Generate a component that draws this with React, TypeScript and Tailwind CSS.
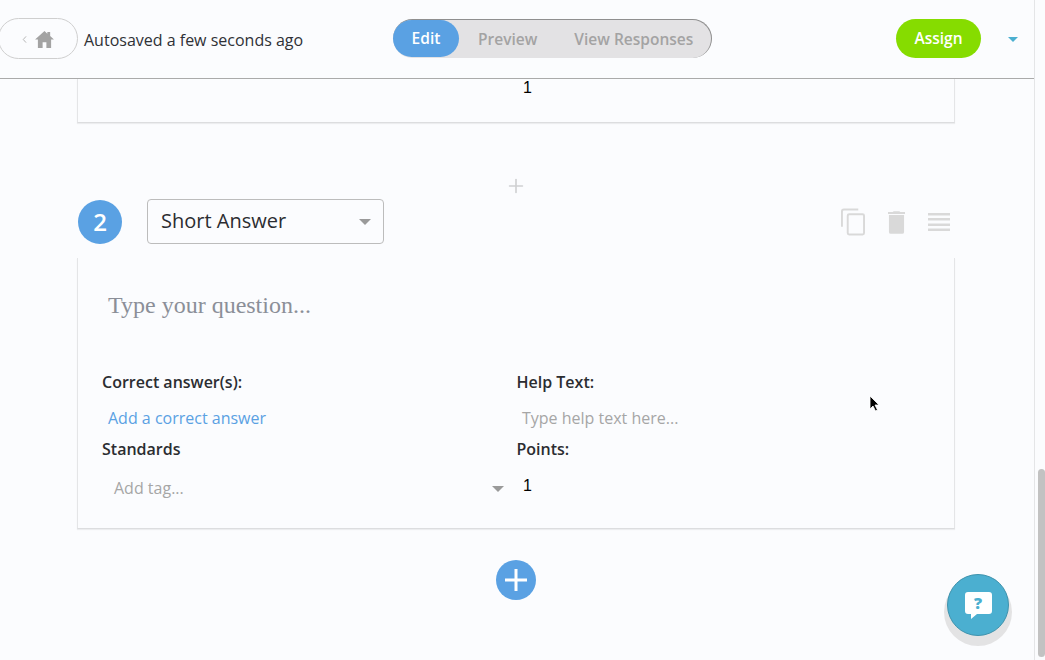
import { Plus } from "lucide-react";

const font = { fontFamily: '"Open Sans", sans-serif' };

function Caret({ className }: { className: string }) {
  return (
    <svg viewBox="0 0 12 6" className={className} fill="currentColor">
      <path d="M0 0h12L6 6z" />
    </svg>
  );
}

function Header() {
  return (
    <div className="relative flex h-[79px] shrink-0 items-center border-b border-[#aaaaaa] pb-[1px]">
      <div className="ml-[-2px] flex h-[41px] w-[80px] items-center justify-center gap-[8px] rounded-full border border-[#cfcfcf] pr-[1px] pt-[1px]">
        <svg viewBox="0 0 8 12" className="h-[9px] w-[5px]" fill="none" stroke="#a8a8a8" strokeWidth="1.300">
          <path d="M6.500 1 2 6l4.500 5" />
        </svg>
        <svg viewBox="0 0 20 18" className="h-[17px] w-[19px]" fill="#a3a3a3">
          <path d="M10 0 0 9h3v9h5v-6h4v6h5V9h3l-4-3.600V1h-3v2z" />
        </svg>
      </div>
      <span className="ml-[6px] pt-[3px] text-[16px] text-[#2f3136]">Autosaved a few seconds ago</span>
      <div className="absolute left-[393px] top-[19px] flex h-[39px] w-[319px] rounded-full border-t border-r border-[#8f8f8f] bg-[#e3e2e4] text-[15.500px] font-semibold text-[#a3a3a3]">
        <div className="flex h-[37px] w-[66px] items-center justify-center rounded-full bg-[#5aa1e3] pt-[1px] text-white">Edit</div>
        <span className="ml-[19px] mt-[8px]">Preview</span>
        <span className="ml-[37px] mt-[8px]">View Responses</span>
      </div>
      <div className="absolute left-[896px] top-[19px] flex h-[39px] w-[85px] items-center justify-center rounded-full bg-[#86dc00] pt-[1px] text-[15.500px] font-semibold text-white">
        Assign
      </div>
      <Caret className="absolute left-[1008px] top-[37px] h-[5px] w-[10px] text-[#4bafd0]" />
    </div>
  );
}

function Field({ label, children }: { label: string; children: React.ReactNode }) {
  return (
    <div>
      <div className="text-[16px] font-semibold leading-[20px] text-[#2b2d31]">{label}</div>
      {children}
    </div>
  );
}

export default function App() {
  return (
    <div className="relative flex h-[660px] w-[1045px] overflow-hidden bg-[#fbfcfe]" style={font}>
      <div className="flex w-[1034px] flex-col">
        <Header />

        <div className="ml-[77px] h-[44px] w-[878px] border-x border-b border-x-[#e4e5e7] border-b-[#dcdddf] pl-[445px] shadow-[0_1px_1px_rgba(0,0,0,0.06)]">
          <div className="text-[16px] leading-[17px] text-black" style={{ fontFamily: '"Liberation Sans", sans-serif' }}>
            1
          </div>
        </div>

        <div className="mt-[52px] flex justify-center">
          <Plus className="ml-[-3px] h-[22px] w-[22px] text-[#cfd0d2]" strokeWidth={1.8} />
        </div>

        <div className="ml-[78px] mt-[2px] flex h-[45px] w-[877px] items-center">
          <div className="mt-[1px] flex h-[44px] w-[44px] items-center justify-center rounded-full bg-[#5aa1e3] text-[24px] font-semibold text-white">
            2
          </div>
          <div className="ml-[25px] flex h-[45px] w-[237px] items-center justify-between rounded-[4px] border border-[#bcbcbc] pb-[2px] pl-[13px] pr-[12px] text-[20px] text-[#2b2d31]">
            Short Answer
            <Caret className="mt-[2px] h-[6px] w-[12px] text-[#9a9a9a]" />
          </div>
          <div className="ml-auto mr-[5px] flex items-center pt-[1px] text-[#d9d9d9]">
            <svg viewBox="0 0 25 28" className="h-[28px] w-[24px]" fill="none" stroke="currentColor" strokeWidth="2">
              <path d="M18 1H3a2 2 0 0 0-2 2v16" />
              <rect x="7" y="6" width="17" height="21" rx="1.500" />
            </svg>
            <svg viewBox="0 0 18 24" className="ml-[23px] h-[23px] w-[17px]" fill="currentColor">
              <path d="M6 0h6l1 1h5v2H0V1h5zM1 4h16v18a2 2 0 0 1-2 2H3a2 2 0 0 1-2-2z" />
            </svg>
            <svg viewBox="0 0 22 18" className="ml-[23px] h-[18px] w-[22px]" fill="currentColor">
              <path d="M0 0h22v2.500H0zM0 5h22v2.500H0zM0 10.500h22v2.500H0zM0 15.500h22v2.500H0z" />
            </svg>
          </div>
        </div>

        <div className="ml-[77px] mt-[14px] h-[271px] w-[878px] border-x border-b border-x-[#e4e5e7] border-b-[#dcdddf] pl-[24px] shadow-[0_1px_1px_rgba(0,0,0,0.06)]">
          <div className="pl-[6px] pt-[30px] text-[24px] leading-[34px] text-[#8b8f98]" style={{ fontFamily: '"Liberation Serif", serif' }}>
            Type your question...
          </div>
          <div className="mt-[50px] grid grid-cols-[414.500px_1fr]">
            <Field label="Correct answer(s):">
              <div className="mb-[11px] ml-[6px] mt-[16px] text-[16px] leading-[20px] text-[#5aa1e3]">Add a correct answer</div>
            </Field>
            <Field label="Help Text:">
              <div className="mb-[11px] ml-[5.500px] mt-[16px] text-[16px] leading-[20px] text-[#a6a6a6]">Type help text here...</div>
            </Field>
            <Field label="Standards">
              <div className="relative ml-[12px] mt-[19px] text-[16px] leading-[20px] text-[#a6a6a6]">
                Add tag...
                <Caret className="absolute left-[378px] top-[8px] h-[6px] w-[12px] text-[#9a9a9a]" />
              </div>
            </Field>
            <Field label="Points:">
              <div className="ml-[6.500px] mt-[17px] text-[16px] leading-[20px] text-black" style={{ fontFamily: '"Liberation Sans", sans-serif' }}>
                1
              </div>
            </Field>
          </div>
        </div>

        <div className="mt-[31px] flex justify-center">
          <div className="ml-[-2px] flex h-[40px] w-[40px] items-center justify-center rounded-full bg-[#5aa1e3]">
            <svg viewBox="0 0 22 22" className="h-[22px] w-[22px]" fill="#fff">
              <path d="M9.500 0h3v9.500H22v3h-9.500V22h-3v-9.500H0v-3h9.500z" />
            </svg>
          </div>
        </div>
      </div>

      {/* scrollbar */}
      <div className="w-[11px] border-l border-[#e4e5e7] pl-[3px] pt-[469px]">
        <div className="h-[188px] w-[7px] rounded-full bg-[#c2c2c2]" />
      </div>

      {/* mouse pointer */}
      <svg viewBox="0 0 12 18" className="absolute left-[869px] top-[395px] h-[18px] w-[12px]">
        <path d="M1 1v13l3-3 2.500 5 2-1-2.500-5h4z" fill="#000" stroke="#fff" strokeWidth="0.800" />
      </svg>

      {/* help bubble */}
      <div className="absolute left-[944px] top-[578px] h-[68px] w-[68px] rounded-full bg-[#e3e3e4]" />
      <div className="absolute left-[947px] top-[574px] flex h-[62px] w-[62px] items-center justify-center rounded-full border border-[#3f93ad] bg-[#4bafd0]">
        <div className="relative h-[27px] w-[27px]">
          <svg viewBox="0 0 27 27" className="h-[27px] w-[27px]" fill="#fff">
            <path d="M3 0h21a3 3 0 0 1 3 3v16a3 3 0 0 1-3 3H12l-6 5v-5H3a3 3 0 0 1-3-3V3a3 3 0 0 1 3-3z" />
          </svg>
          <span className="absolute inset-x-0 top-[1px] text-center text-[16px] font-extrabold leading-[20px] text-[#4bafd0]">?</span>
        </div>
      </div>
    </div>
  );
}
